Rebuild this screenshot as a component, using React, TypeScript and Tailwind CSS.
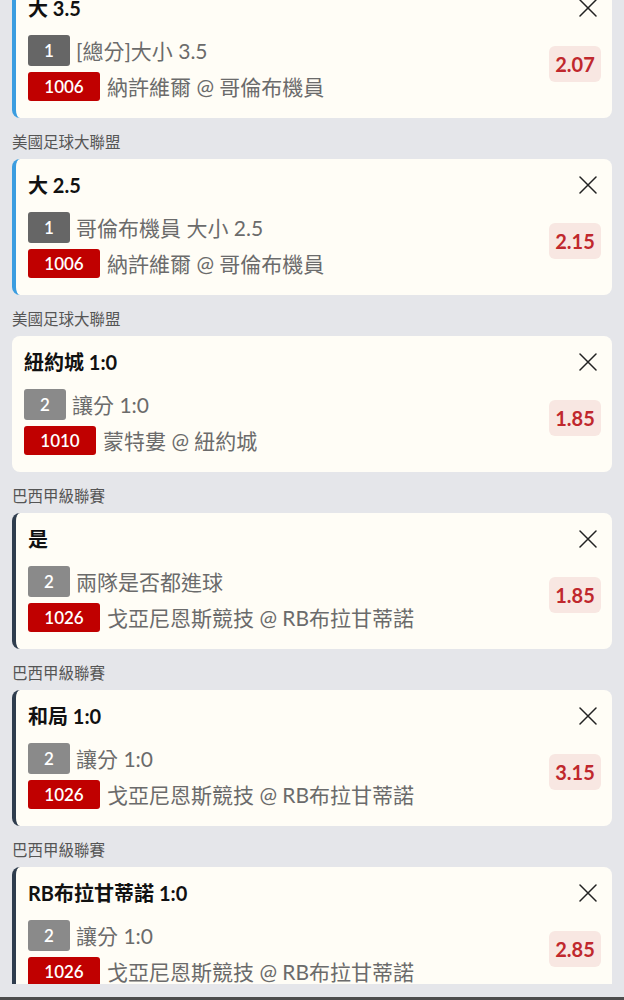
type Bet = {
  league?: string;
  title: string;
  seq: string;
  seqDark?: boolean;
  market: string;
  code: string;
  match: string;
  odds: string;
  accent: "blue" | "slate" | "none";
};

const bets: Bet[] = [
  {
    title: "大 3.5",
    seq: "1",
    seqDark: true,
    market: "[總分]大小 3.5",
    code: "1006",
    match: "納許維爾 @ 哥倫布機員",
    odds: "2.07",
    accent: "blue",
  },
  {
    league: "美國足球大聯盟",
    title: "大 2.5",
    seq: "1",
    seqDark: true,
    market: "哥倫布機員 大小 2.5",
    code: "1006",
    match: "納許維爾 @ 哥倫布機員",
    odds: "2.15",
    accent: "blue",
  },
  {
    league: "美國足球大聯盟",
    title: "紐約城 1:0",
    seq: "2",
    market: "讓分 1:0",
    code: "1010",
    match: "蒙特婁 @ 紐約城",
    odds: "1.85",
    accent: "none",
  },
  {
    league: "巴西甲級聯賽",
    title: "是",
    seq: "2",
    market: "兩隊是否都進球",
    code: "1026",
    match: "戈亞尼恩斯競技 @ RB布拉甘蒂諾",
    odds: "1.85",
    accent: "slate",
  },
  {
    league: "巴西甲級聯賽",
    title: "和局 1:0",
    seq: "2",
    market: "讓分 1:0",
    code: "1026",
    match: "戈亞尼恩斯競技 @ RB布拉甘蒂諾",
    odds: "3.15",
    accent: "slate",
  },
  {
    league: "巴西甲級聯賽",
    title: "RB布拉甘蒂諾 1:0",
    seq: "2",
    market: "讓分 1:0",
    code: "1026",
    match: "戈亞尼恩斯競技 @ RB布拉甘蒂諾",
    odds: "2.85",
    accent: "slate",
  },
];

function CloseIcon() {
  return (
    <svg width="18" height="18" viewBox="0 0 18 18" className="mr-[4px] text-[#222]">
      <path d="M1 1 L17 17 M17 1 L1 17" stroke="currentColor" strokeWidth="1.5" strokeLinecap="round" />
    </svg>
  );
}

function BetCard({ bet, first }: { bet: Bet; first?: boolean }) {
  const accent =
    bet.accent === "blue"
      ? "border-l-4 border-[#3b9de0]"
      : bet.accent === "slate"
      ? "border-l-4 border-[#2f3d4e]"
      : "";

  return (
    <div
      className={`flex h-[136px] shrink-0 rounded-lg bg-[#fffdf6] ${accent} ${
        first ? "-mt-[18px]" : ""
      }`}
    >
      {/* 左側內容 */}
      <div className="flex flex-1 flex-col pl-3 pt-[14px]">
        <div className="h-6 text-[20px] font-bold leading-6 text-[#111]">
          {bet.title}
        </div>
        <div className="mt-[15px] flex h-[31px] items-center">
          <span
            className={`flex h-[31px] w-[42px] items-center justify-center rounded-[3px] text-[17px] font-semibold text-white ${
              bet.seqDark ? "bg-[#666666]" : "bg-[#8a8a8a]"
            }`}
          >
            {bet.seq}
          </span>
          <span className="ml-[6px] text-[21px] text-[#6b6b6b]">{bet.market}</span>
        </div>
        <div className="mt-[6px] flex h-[29px] items-center">
          <span className="flex h-[29px] w-[72px] items-center justify-center rounded-[3px] bg-[#c00000] text-[17px] font-semibold text-white">
            {bet.code}
          </span>
          <span className="ml-[7px] text-[21px] text-[#6b6b6b]">{bet.match}</span>
        </div>
      </div>

      {/* 右側：關閉 + 賠率 */}
      <div className="flex flex-col items-end pr-[11px] pt-[17px]">
        <CloseIcon />
        <div className="mt-[29px] flex h-[36px] w-[52px] items-center justify-center rounded-md bg-[#f8e7e2] text-[20px] font-bold text-[#c0282d]">
          {bet.odds}
        </div>
      </div>
    </div>
  );
}

export default function App() {
  return (
    <div className="flex h-[1000px] w-full flex-col bg-[#e5e6ea] font-['Lato','Noto_Sans_CJK_TC',sans-serif]">
      <div className="flex h-[984px] flex-col overflow-hidden px-3">
        {bets.map((bet, i) => (
          <div key={i} className="flex shrink-0 flex-col">
            {bet.league && (
              <div className="mb-[7px] mt-[14px] h-5 text-[15.5px] leading-5 text-[#555]">
                {bet.league}
              </div>
            )}
            <BetCard bet={bet} first={i === 0} />
          </div>
        ))}
      </div>
      <div className="flex-1" />
      <div className="h-[3px] bg-[#4d4d4d]" />
    </div>
  );
}
